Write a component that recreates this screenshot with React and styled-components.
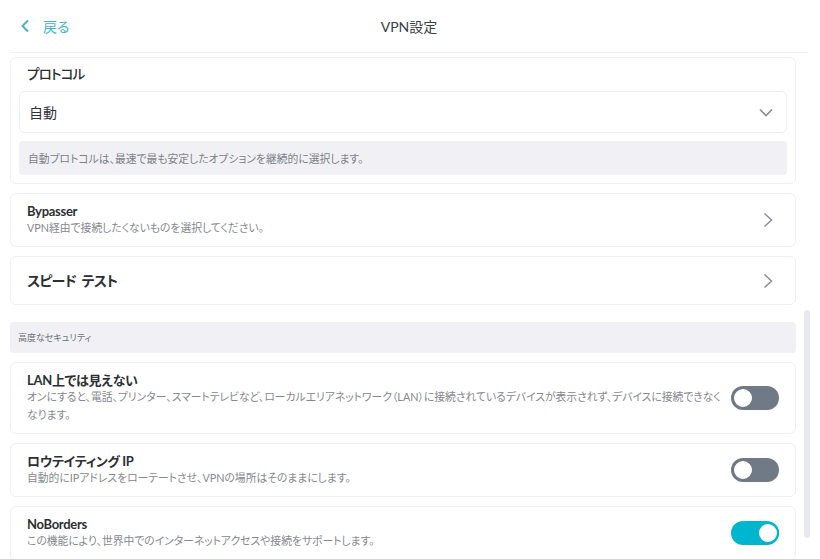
import React from 'react'
import styled, { createGlobalStyle } from 'styled-components'

const GlobalStyle = createGlobalStyle`
  html, body {
    margin: 0;
    padding: 0;
    background: #ffffff;
  }
  body {
    font-family: Lato, "Noto Sans CJK JP", sans-serif;
    font-feature-settings: "palt";
    color: #2f3237;
    overflow: hidden;
  }
`

const Page = styled.div`
  position: relative;
  width: 820px;
  height: 559px;
  overflow: hidden;
  background: #fff;
`
const Header = styled.header`
  position: relative;
  display: flex;
  align-items: center;
  height: 52px;
  margin: 0 12px 0 10px;
  border-bottom: 1px solid #eef0f3;
`
const BackButton = styled.div`
  display: flex;
  align-items: center;
  gap: 13px;
  padding-left: 10px;
  color: #45b4c9;
  font-size: 14px;
  cursor: pointer;
`
const Title = styled.div`
  position: absolute;
  left: 0;
  right: 0;
  text-align: center;
  font-size: 14px;
  color: #3a3d42;
  pointer-events: none;
`
const Content = styled.main`
  display: flex;
  flex-direction: column;
  gap: 9px;
  padding: 4px 24px 0 10px;
`
const Card = styled.section`
  border: 1px solid #eeeff2;
  border-radius: 6px;
  background: #fff;
  box-sizing: border-box;
`
const ProtocolCard = styled(Card)`
  padding: 0 8px 8px;
`
const ProtocolLabel = styled.div`
  padding: 8px 0 0 8px;
  height: 33px;
  box-sizing: border-box;
  font-size: 13.5px;
  font-weight: 500;
  line-height: 17px;
  letter-spacing: -0.8px;
  color: #2c2f33;
`
const Select = styled.div`
  display: flex;
  align-items: center;
  justify-content: space-between;
  height: 42px;
  box-sizing: border-box;
  padding: 0 13px 0 9px;
  border: 1px solid #eeeff2;
  border-radius: 6px;
  font-size: 14px;
`
const Note = styled.div`
  display: flex;
  align-items: center;
  height: 34px;
  margin-top: 8px;
  padding: 0 9px;
  box-sizing: border-box;
  background: #f1f1f5;
  border-radius: 4px;
  font-size: 10.8px;
  color: #7d8086;
`
const RowCard = styled(Card)`
  display: flex;
  align-items: center;
  justify-content: space-between;
  gap: ${p => (p.$chevron ? 16 : 8)}px;
  min-height: ${p => p.$minHeight || 54}px;
  padding: 9px ${p => (p.$chevron ? 22 : 16)}px 9px 16px;
`
const RowText = styled.div`
  display: flex;
  flex-direction: column;
  flex: 1;
`
const RowTitle = styled.div`
  font-size: ${p => (p.$large ? 14 : 13)}px;
  font-weight: 700;
  line-height: 16px;
  letter-spacing: ${p => (p.$large ? -0.8 : -0.3)}px;
  word-spacing: ${p => (p.$large ? 3 : 0)}px;
  color: #2c2f33;
`
const RowDesc = styled.div`
  font-size: 10.8px;
  line-height: 18px;
  color: #85888e;
`
const SectionHeader = styled.div`
  display: flex;
  align-items: center;
  height: 31px;
  margin-top: 8px;
  padding: 0 8px;
  background: #f1f1f5;
  border-radius: 4px;
  font-size: 9px;
  color: #6d7076;
`
const ArrowRight = styled.svg`
  flex: none;
  width: 10px;
  height: 16px;
  color: #8a8d92;
`
const ArrowDown = styled.svg`
  flex: none;
  width: 14px;
  height: 9px;
  color: #8a8d92;
`
const Toggle = styled.div`
  position: relative;
  flex: none;
  width: 48px;
  height: 24px;
  border-radius: 12px;
  background: ${p => (p.$on ? '#00b6cf' : '#6f7a86')};
  &::after {
    content: '';
    position: absolute;
    top: 1px;
    left: ${p => (p.$on ? '26px' : '1px')};
    width: 18px;
    height: 18px;
    border-radius: 50%;
    background: #fff;
    border: 2px solid ${p => (p.$on ? '#00b6cf' : '#6f7a86')};
  }
`
const ScrollThumb = styled.div`
  position: absolute;
  left: 804px;
  top: 310px;
  width: 6px;
  height: 228px;
  border-radius: 3px;
  background: #e7e9ed;
`

const ChevronRight = () => (
  <ArrowRight viewBox="0 0 10 16" fill="none" stroke="currentColor" strokeWidth="1.5">
    <path d="M1.5 1.5L8.5 8 1.5 14.5" />
  </ArrowRight>
)

const ChevronDown = () => (
  <ArrowDown viewBox="0 0 14 9" fill="none" stroke="currentColor" strokeWidth="1.6">
    <path d="M1 1.5l6 6 6-6" />
  </ArrowDown>
)

const securityRows = [
  {
    title: 'LAN上では見えない',
    desc:
      'オンにすると、電話、プリンター、スマートテレビなど、ローカルエリアネットワーク（LAN）に接続されているデバイスが表示されず、デバイスに接続できなくなります。',
    on: false,
  },
  {
    title: 'ロウテイティング IP',
    desc: '自動的にIPアドレスをローテートさせ、VPNの場所はそのままにします。',
    on: false,
  },
  {
    title: 'NoBorders',
    desc: 'この機能により、世界中でのインターネットアクセスや接続をサポートします。',
    on: true,
  },
]

export default function App() {
  return (
    <Page>
      <GlobalStyle />
      <Header>
        <BackButton>
          <svg width="10" height="14" viewBox="0 0 10 14" fill="none" stroke="currentColor" strokeWidth="2">
            <path d="M8 1.5L2.5 7 8 12.5" />
          </svg>
          戻る
        </BackButton>
        <Title>VPN設定</Title>
      </Header>
      <Content>
        <ProtocolCard>
          <ProtocolLabel>プロトコル</ProtocolLabel>
          <Select>
            自動
            <ChevronDown />
          </Select>
          <Note>自動プロトコルは、最速で最も安定したオプションを継続的に選択します。</Note>
        </ProtocolCard>
        <RowCard $chevron>
          <RowText>
            <RowTitle>Bypasser</RowTitle>
            <RowDesc>VPN経由で接続したくないものを選択してください。</RowDesc>
          </RowText>
          <ChevronRight />
        </RowCard>
        <RowCard $chevron $minHeight={49}>
          <RowText>
            <RowTitle $large>スピード テスト</RowTitle>
          </RowText>
          <ChevronRight />
        </RowCard>
        <SectionHeader>高度なセキュリティ</SectionHeader>
        {securityRows.map(row => (
          <RowCard key={row.title}>
            <RowText>
              <RowTitle>{row.title}</RowTitle>
              <RowDesc>{row.desc}</RowDesc>
            </RowText>
            <Toggle $on={row.on} />
          </RowCard>
        ))}
      </Content>
      <ScrollThumb />
    </Page>
  )
}
